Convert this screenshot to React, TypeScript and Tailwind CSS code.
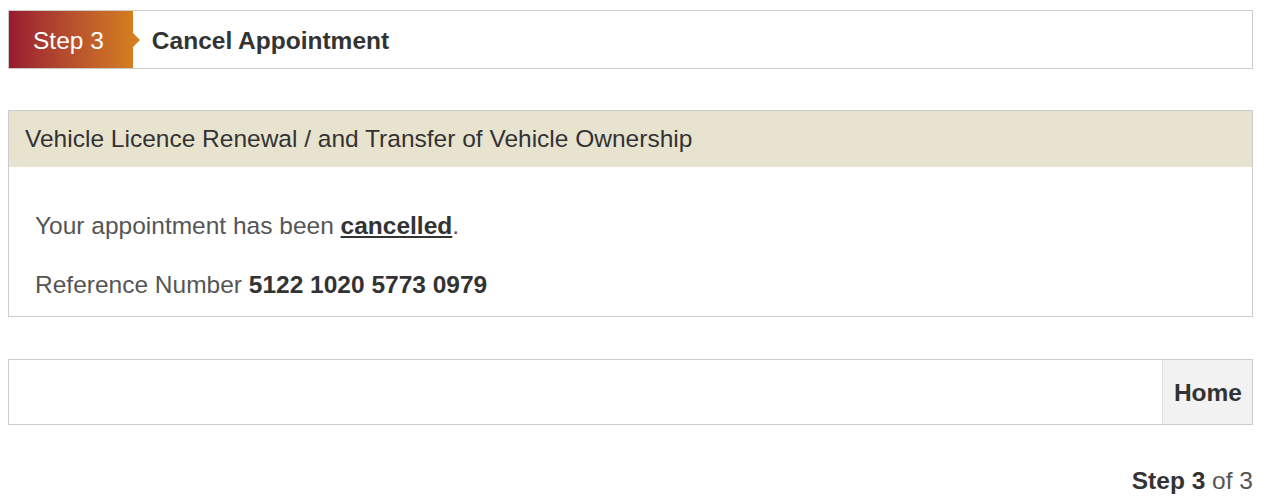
export default function App() {
  return (
    <div
      className="bg-white pl-2 pr-6 pt-[10px] text-[24.5px] leading-[36px] text-[#555]"
      style={{ fontFamily: '"Liberation Sans", Arial, sans-serif' }}
    >
      {/* step header */}
      <div className="flex h-[59px] items-stretch border border-[#cccccc] bg-white">
        <div className="relative flex items-center bg-gradient-to-r from-[#981a30] to-[#d47d1e] pl-6 pr-[29px] pt-[2px] text-white">
          Step 3
          <span className="absolute right-[-7px] top-1/2 h-0 w-0 -translate-y-1/2 border-y-[7px] border-l-[7px] border-y-transparent border-l-[#d47d1e]" />
        </div>
        <div className="flex items-center pl-[19px] pt-[2px] font-bold text-[#333]">Cancel Appointment</div>
      </div>

      {/* result panel */}
      <div className="mt-[41px] border border-[#cccccc]">
        <div className="flex h-[56px] items-center bg-[#e8e3cf] pl-4 text-[#333]">
          Vehicle Licence Renewal / and Transfer of Vehicle Ownership
        </div>
        <div className="px-[26px] pb-[13px] pt-[41px]">
          <p className="mb-[23px]">
            Your appointment has been{' '}
            <span className="font-bold text-[#333] underline decoration-2 underline-offset-2">cancelled</span>.
          </p>
          <p>
            Reference Number <span className="font-bold text-[#333]">5122 1020 5773 0979</span>
          </p>
        </div>
      </div>

      {/* actions */}
      <div className="mt-[42px] flex h-[66px] justify-end border border-[#cccccc]">
        <button
          type="button"
          className="border-l border-[#e2e2e2] bg-[#f2f2f2] pl-[11px] pr-[10px] pt-[2px] font-bold text-[#333]"
        >
          Home
        </button>
      </div>

      <div className="mt-[38px] text-right">
        <span className="font-bold text-[#333]">Step 3</span> of 3
      </div>
    </div>
  );
}
